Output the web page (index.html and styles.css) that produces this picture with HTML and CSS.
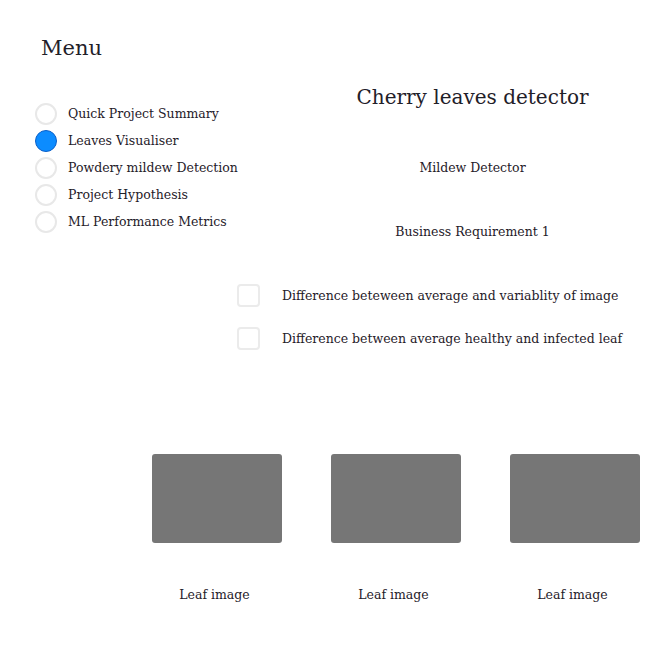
FILE: index.html
```html
<!DOCTYPE html>
<html lang="en">
<head>
    <meta charset="UTF-8">
    <meta name="viewport" content="width=device-width, initial-scale=1.0">
    <title>Cherry leaves detector</title>
    <link rel="stylesheet" href="styles.css">
</head>
<body>
    <div class="top">
        <aside class="menu">
            <h2>Menu</h2>
            <div class="radio-list">
                <label class="radio-row"><span class="radio"></span>Quick Project Summary</label>
                <label class="radio-row"><span class="radio checked"></span>Leaves Visualiser</label>
                <label class="radio-row"><span class="radio"></span>Powdery mildew Detection</label>
                <label class="radio-row"><span class="radio"></span>Project Hypothesis</label>
                <label class="radio-row"><span class="radio"></span>ML Performance Metrics</label>
            </div>
        </aside>
        <header class="header">
            <h1>Cherry leaves detector</h1>
            <p class="subtitle">Mildew Detector</p>
            <p class="requirement">Business Requirement 1</p>
        </header>
    </div>

    <div class="checks">
        <label class="check-row"><span class="box"></span>Difference beteween average and variablity of image</label>
        <label class="check-row"><span class="box"></span>Difference between average healthy and infected leaf</label>
    </div>

    <div class="gallery">
        <figure class="leaf">
            <div class="leaf-img"></div>
            <figcaption>Leaf image</figcaption>
        </figure>
        <figure class="leaf">
            <div class="leaf-img"></div>
            <figcaption>Leaf image</figcaption>
        </figure>
        <figure class="leaf">
            <div class="leaf-img"></div>
            <figcaption>Leaf image</figcaption>
        </figure>
    </div>
</body>
</html>
```

FILE: styles.css
```css
* {
    margin: 0;
    padding: 0;
    box-sizing: border-box;
}

body {
    font-family: "DejaVu Serif", "Liberation Serif", serif;
    color: #1f2029;
    background: #fff;
    font-size: 12.5px;
}

.top {
    display: grid;
    grid-template-columns: 290px 1fr;
}

/* Sidebar menu */
.menu {
    padding: 34px 0 0 35px;
}

.menu h2 {
    font-weight: normal;
    font-size: 21px;
    line-height: 28px;
    margin-left: 6px;
    margin-bottom: 38px;
}

.radio-list {
    display: flex;
    flex-direction: column;
}

.radio-row {
    display: flex;
    align-items: center;
    gap: 11px;
    height: 27px;
}

.radio {
    width: 22px;
    height: 22px;
    border-radius: 50%;
    border: 2px solid #e8e8e8;
    background: #fff;
}

.radio.checked {
    background: #0c8cff;
    border: 1px solid #0a5fc8;
}

/* Header */
.header {
    text-align: center;
    padding-top: 83px;
}

.header h1 {
    font-weight: normal;
    font-size: 20px;
    line-height: 28px;
}

.subtitle {
    margin-top: 47px;
    line-height: 20px;
}

.requirement {
    margin-top: 44px;
    line-height: 20px;
}

/* Checkbox list */
.checks {
    padding: 42px 0 0 237px;
    display: flex;
    flex-direction: column;
    gap: 20px;
}

.check-row {
    display: flex;
    align-items: center;
    gap: 22px;
    height: 23px;
}

.box {
    width: 23px;
    height: 23px;
    border: 2px solid #ebebeb;
    border-radius: 4px;
}

/* Leaf images */
.gallery {
    display: grid;
    grid-template-columns: repeat(3, 130px);
    column-gap: 49px;
    padding: 104px 0 0 152px;
}

.leaf-img {
    height: 89px;
    background: #767676;
    border-radius: 3px;
}

.leaf figcaption {
    text-align: center;
    margin-top: 42px;
    padding-right: 5px;
    line-height: 20px;
}
```
